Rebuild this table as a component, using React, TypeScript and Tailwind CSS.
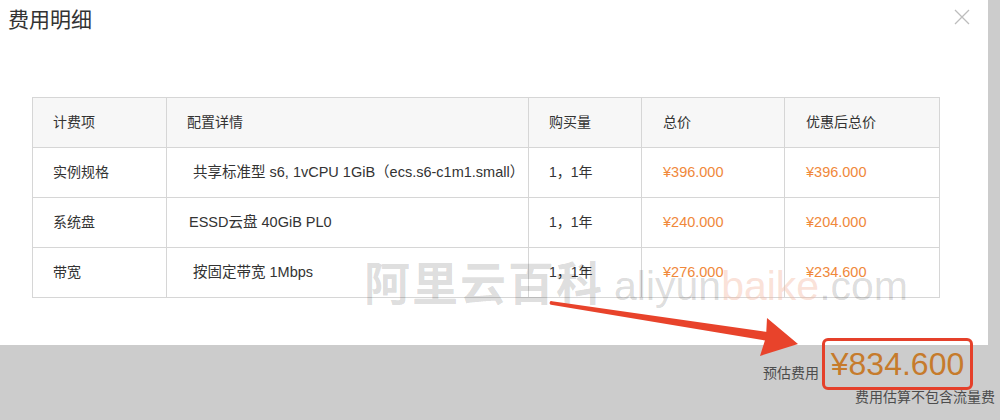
const font = "font-['Liberation_Sans','Noto_Sans_CJK_SC',sans-serif]";

const rows = [
  {
    item: "实例规格",
    detail: "共享标准型 s6, 1vCPU 1GiB（ecs.s6-c1m1.small）",
    pad: "pl-[26px]",
    qty: "1，1年",
    total: "¥396.000",
    final: "¥396.000",
  },
  {
    item: "系统盘",
    detail: "ESSD云盘 40GiB PL0",
    pad: "pl-[22px]",
    qty: "1，1年",
    total: "¥240.000",
    final: "¥204.000",
  },
  {
    item: "带宽",
    detail: "按固定带宽 1Mbps",
    pad: "pl-[26px]",
    qty: "1，1年",
    total: "¥276.000",
    final: "¥234.600",
  },
];

function Arrow() {
  return (
    <svg
      className="pointer-events-none absolute left-0 top-0 z-20"
      width="1000"
      height="420"
      viewBox="0 0 1000 420"
    >
      <path
        d="M552 301.2 L771 332.5 L771.5 341.5 L551 304.8 A1.8 1.8 0 0 1 552 301.2 Z"
        fill="#e8432b"
      />
      <polygon points="767,318 798,344 760,356 766,337" fill="#e8432b" />
    </svg>
  );
}

function Watermark() {
  return (
    <div className="pointer-events-none absolute left-[364px] top-[250px] z-10 flex items-baseline whitespace-nowrap">
      <span className="text-[46px] font-bold tracking-[2px] text-black/15">阿里云百科</span>
      <span className="ml-[10px] text-[41px] text-black/15">aliyun</span>
      <span className="text-[41px] text-[#f3b49c]/40">baike</span>
      <span className="text-[41px] text-black/15">.com</span>
    </div>
  );
}

export default function App() {
  return (
    <div className={`relative h-[420px] w-[1000px] overflow-hidden bg-[#cccccc] ${font}`}>
      <div className="flex">
        {/* ── Dialog ── */}
        <div className="h-[345px] w-[988px] bg-white">
          <div className="flex items-start justify-between pl-[8px] pr-[18px] pt-[6px]">
            <h1 className="text-[21px] leading-[28px] text-[#333]">费用明细</h1>
            <svg width="16" height="16" viewBox="0 0 16 16" className="mt-[3px]">
              <path d="M1 1 L15 15 M15 1 L1 15" stroke="#bdbdbd" strokeWidth="1.3" />
            </svg>
          </div>

          <table className="ml-[32px] mt-[63px] w-[907px] table-fixed border-collapse text-[14px] text-[#333]">
            <colgroup>
              <col className="w-[134px]" />
              <col className="w-[362px]" />
              <col className="w-[113px]" />
              <col className="w-[143px]" />
              <col className="w-[155px]" />
            </colgroup>
            <thead>
              <tr className="h-[50px] bg-[#f7f7f7] text-left">
                <th className="border border-[#d6d6d6] pl-[20px] font-normal">计费项</th>
                <th className="border border-[#d6d6d6] pl-[20px] font-normal">配置详情</th>
                <th className="border border-[#d6d6d6] pl-[20px] font-normal">购买量</th>
                <th className="border border-[#d6d6d6] pl-[21px] font-normal">总价</th>
                <th className="border border-[#d6d6d6] pl-[21px] font-normal">优惠后总价</th>
              </tr>
            </thead>
            <tbody>
              {rows.map((r) => (
                <tr key={r.item} className="h-[50px]">
                  <td className="border border-[#d6d6d6] pl-[20px]">{r.item}</td>
                  <td className={`whitespace-nowrap border border-[#d6d6d6] text-[14.5px] ${r.pad}`}>{r.detail}</td>
                  <td className="border border-[#d6d6d6] pl-[20px]">{r.qty}</td>
                  <td className="border border-[#d6d6d6] pl-[21px] text-[14.5px] text-[#f0883a]">{r.total}</td>
                  <td className="border border-[#d6d6d6] pl-[21px] text-[14.5px] text-[#f0883a]">{r.final}</td>
                </tr>
              ))}
            </tbody>
          </table>
        </div>
        <div className="flex-1" />
      </div>

      {/* ── Footer ── */}
      <div className="flex flex-col items-end pr-[5px]">
        <div className="-mt-[7px] flex items-center pr-[22px]">
          <span className="mt-[18px] text-[14px] text-[#4d4d4d]">预估费用</span>
          <div className="relative z-10 ml-[3px] flex h-[52px] w-[151px] items-center justify-center rounded-[6px] border-[3px] border-[#e5402a]">
            <span className="text-[32px] leading-none text-[#c67b2c]">¥834.600</span>
          </div>
        </div>
        <span className="-mt-[3px] text-[14px] text-[#4d4d4d]">费用估算不包含流量费</span>
      </div>

      <Watermark />
      <Arrow />
    </div>
  );
}
